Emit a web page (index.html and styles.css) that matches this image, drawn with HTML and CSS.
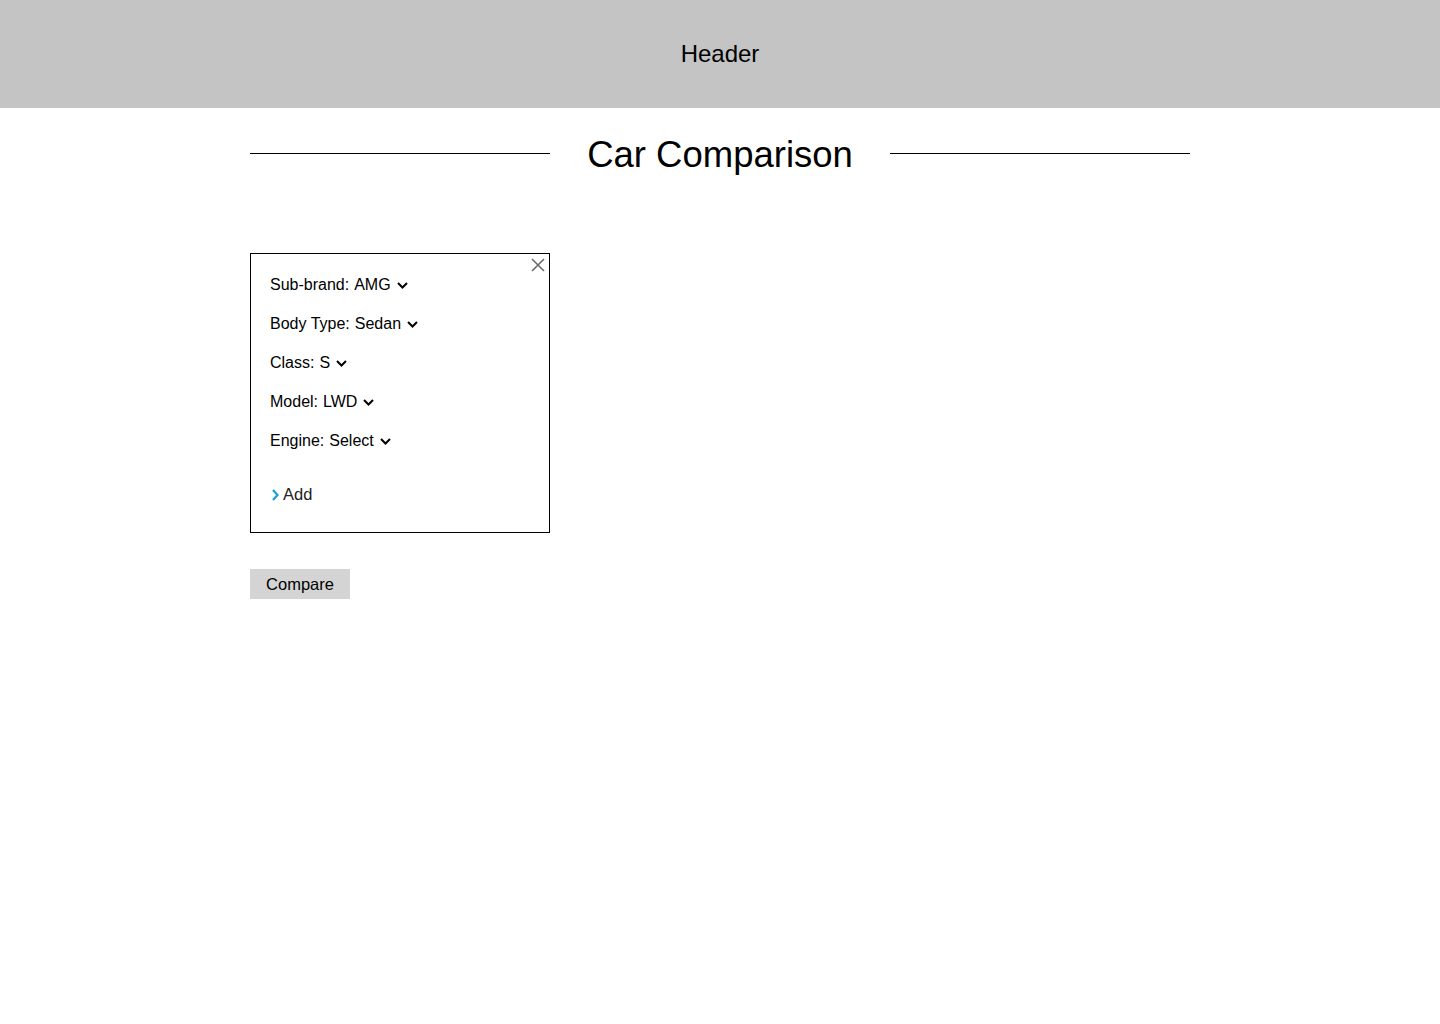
FILE: index.html
```html
<!DOCTYPE html>
<html>
<head>
<meta charset="utf-8">
<link rel="stylesheet" href="styles.css">
</head>
<body>
<header class="site-header">Header</header>
<main class="content">
  <div class="title-row">
    <span class="title-line"></span>
    <h1 class="title">Car Comparison</h1>
    <span class="title-line"></span>
  </div>
  <section class="card">
    <button class="close" aria-label="Close">
      <svg width="14" height="14" viewBox="0 0 14 14"><path d="M1 1L13 13M13 1L1 13" stroke="#6b6b6b" stroke-width="1.6" fill="none"/></svg>
    </button>
    <div class="field"><span class="label">Sub-brand:</span><span class="value">AMG</span><svg class="chev" width="11" height="7" viewBox="0 0 11 7"><path d="M1 1l4.5 4.5L10 1" stroke="#000" stroke-width="2" fill="none"/></svg></div>
    <div class="field"><span class="label">Body Type:</span><span class="value">Sedan</span><svg class="chev" width="11" height="7" viewBox="0 0 11 7"><path d="M1 1l4.5 4.5L10 1" stroke="#000" stroke-width="2" fill="none"/></svg></div>
    <div class="field"><span class="label">Class:</span><span class="value">S</span><svg class="chev" width="11" height="7" viewBox="0 0 11 7"><path d="M1 1l4.5 4.5L10 1" stroke="#000" stroke-width="2" fill="none"/></svg></div>
    <div class="field"><span class="label">Model:</span><span class="value">LWD</span><svg class="chev" width="11" height="7" viewBox="0 0 11 7"><path d="M1 1l4.5 4.5L10 1" stroke="#000" stroke-width="2" fill="none"/></svg></div>
    <div class="field"><span class="label">Engine:</span><span class="value">Select</span><svg class="chev" width="11" height="7" viewBox="0 0 11 7"><path d="M1 1l4.5 4.5L10 1" stroke="#000" stroke-width="2" fill="none"/></svg></div>
    <div class="add"><svg class="chev-right" width="7" height="12" viewBox="0 0 7 12"><path d="M1 1l4.5 5L1 11" stroke="#1a9fd6" stroke-width="2.2" fill="none"/></svg>Add</div>
  </section>
  <button class="compare">Compare</button>
</main>
</body>
</html>
```
FILE: styles.css
```css
* { box-sizing: border-box; }
html, body { margin: 0; padding: 0; background: #fff; }
body { font-family: "Liberation Sans", Arial, sans-serif; color: #000; }

.site-header {
  height: 108px;
  background: #c4c4c4;
  display: flex;
  align-items: center;
  justify-content: center;
  font-size: 24px;
}

.content {
  width: 940px;
  margin: 0 auto;
}

.title-row {
  display: flex;
  align-items: center;
  margin-top: 25px;
  height: 42px;
}
.title-line {
  flex: 0 0 300px;
  height: 1px;
  background: #000;
  margin-top: -2px;
}
.title {
  flex: 1;
  margin: 0;
  text-align: center;
  font-weight: normal;
  font-size: 36.5px;
  line-height: 42px;
  padding-top: 2px;
}

.card {
  position: relative;
  margin-top: 78px;
  width: 300px;
  height: 280px;
  border: 1px solid #000;
  padding: 11px 19px 0;
  display: flex;
  flex-direction: column;
}
.close {
  position: absolute;
  top: 4px;
  right: 4px;
  background: none;
  border: 0;
  padding: 0;
  width: 14px;
  height: 14px;
  cursor: pointer;
  display: flex;
}
.field {
  height: 39px;
  display: flex;
  align-items: center;
  font-size: 16px;
}
.label { margin-right: 5px; }
.chev { margin-left: 6px; margin-top: 1px; }
.add {
  margin-top: 15px;
  height: 39px;
  display: flex;
  align-items: center;
  font-size: 16.5px;
  color: #222;
}
.chev-right { margin-left: 2px; margin-right: 4px; margin-top: 1px; }

.compare {
  margin-top: 36px;
  width: 100px;
  height: 30px;
  border: 0;
  background: #d4d4d4;
  font-family: "Liberation Sans", Arial, sans-serif;
  font-size: 16.5px;
  color: #000;
  padding: 0;
  cursor: pointer;
}
```
